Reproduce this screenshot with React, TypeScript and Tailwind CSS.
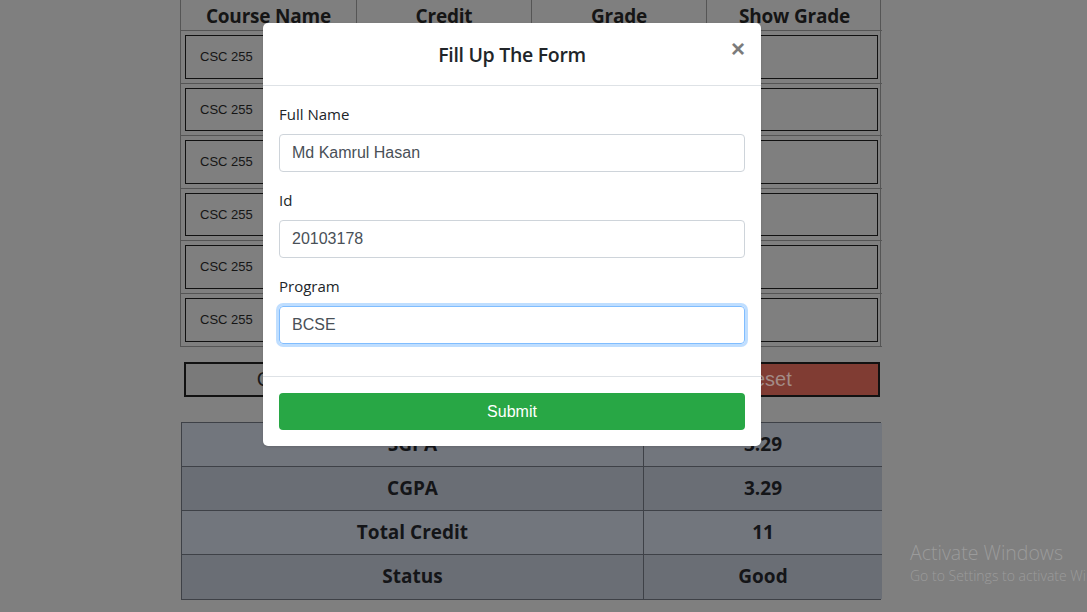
import { useState } from "react";

const courses = ["CSC 255", "CSC 255", "CSC 255", "CSC 255", "CSC 255", "CSC 255"];

const summary = [
  { label: "SGPA", value: "3.29" },
  { label: "CGPA", value: "3.29" },
  { label: "Total Credit", value: "11" },
  { label: "Status", value: "Good" },
];

const App = () => {
  const [name, setName] = useState("Md Kamrul Hasan");
  const [id, setId] = useState("20103178");
  const [program, setProgram] = useState("BCSE");

  return (
    <div className="relative h-[612px] w-[1087px] overflow-hidden bg-[#7f7f7f] font-['Open_Sans',sans-serif]">
      {/* dimmed page behind the modal */}
      <div className="ml-[180px] w-[701px]">
        <div className="grid grid-cols-[176px_175px_175px_175px] border-x border-[#555]">
          {["Course Name", "Credit", "Grade", "Show Grade"].map((h, i) => (
            <div
              key={h}
              className={`flex h-[31px] items-center justify-center border-b border-[#555] text-[19px] font-bold leading-none text-[#151515] ${i < 3 ? "border-r" : ""}`}
            >
              <span className="mt-[3px] tracking-[-0.2px]">{h}</span>
            </div>
          ))}
          {courses.map((c, r) =>
            [0, 1, 2, 3].map((col) => (
              <div
                key={`${r}-${col}`}
                className={`h-[52.6px] border-b border-[#555] p-[4px] ${col < 3 ? "border-r" : ""}`}
              >
                <div className="flex h-full items-center border border-[#111] px-[14px] font-['Liberation_Sans',sans-serif] text-[13px] text-[#151515]">
                  {col === 0 ? c : ""}
                </div>
              </div>
            ))
          )}
        </div>

        <div className="mt-[15px] grid grid-cols-3 gap-[5px] pl-[4px] pr-[1px]">
          <button className="h-[35px] border-2 border-[#111] bg-[#7a7a7a] font-['Liberation_Sans',sans-serif] text-[20px] text-[#1a1a1a]">
            Calculate
          </button>
          <button className="h-[35px] border-2 border-[#111] bg-[#7a7a7a] font-['Liberation_Sans',sans-serif] text-[20px] text-[#1a1a1a]">
            Save
          </button>
          <button className="h-[35px] border-2 border-[#111] bg-[#803c33] font-['Liberation_Sans',sans-serif] text-[20px] text-[#a38b86]">
            Reset
          </button>
        </div>

        <div className="mt-[25px] ml-[1px] grid grid-cols-[462px_238px] border border-[#3e4147] text-[19px] font-bold text-[#141518]">
          {summary.map((s, i) => (
            <div key={s.label} className="contents">
              <div
                className={`flex h-[44px] items-center justify-center border-r border-[#3e4147] ${i < 3 ? "border-b" : ""} ${i % 2 === 0 ? "bg-[#72767d]" : "bg-[#6a6e75]"}`}
              >
                {s.label}
              </div>
              <div
                className={`flex h-[44px] items-center justify-center border-[#3e4147] ${i < 3 ? "border-b" : ""} ${i % 2 === 0 ? "bg-[#72767d]" : "bg-[#6a6e75]"}`}
              >
                {s.value}
              </div>
            </div>
          ))}
        </div>
      </div>

      {/* modal */}
      <div className="absolute left-[263px] top-[23px] w-[498px] rounded-[5px] bg-white shadow-sm">
        <div className="relative flex h-[63px] items-center justify-center border-b border-[#dee2e6]">
          <h5 className="mt-[2px] text-[19.5px] font-semibold tracking-[-0.3px] text-[#212529]">Fill Up The Form</h5>
          <span className="absolute right-[16px] top-[14px] font-['Liberation_Sans',sans-serif] text-[24px] font-bold leading-none text-[#7b7b7b]">
            ×
          </span>
        </div>
        <div className="px-[16px] pb-[16px] pt-[16px]">
          {[
            { label: "Full Name", value: name, set: setName, focus: false },
            { label: "Id", value: id, set: setId, focus: false },
            { label: "Program", value: program, set: setProgram, focus: true },
          ].map((f) => (
            <div key={f.label} className="mb-[16px]">
              <label className="mb-[8px] block text-[15px] leading-[24px] text-[#212529]">{f.label}</label>
              <input
                value={f.value}
                onChange={(e) => f.set(e.target.value)}
                className={`h-[38px] w-full rounded-[4px] border px-[12px] font-['Liberation_Sans',sans-serif] text-[16px] text-[#495057] outline-none ${f.focus ? "border-[#80bdff] shadow-[0_0_0_3px_rgba(0,123,255,0.25)]" : "border-[#ced4da]"}`}
              />
            </div>
          ))}
        </div>
        <div className="border-t border-[#dee2e6] px-[16px] py-[16px]">
          <button className="h-[37px] w-full rounded-[4px] bg-[#28a745] font-['Liberation_Sans',sans-serif] text-[16px] text-white">
            Submit
          </button>
        </div>
      </div>

      <div className="absolute left-[910px] top-[540px] whitespace-nowrap font-['Open_Sans',sans-serif] text-[#9b9b9b]">
        <div className="text-[19.5px] font-light leading-[26px]">Activate Windows</div>
        <div className="text-[14px] font-light leading-[20px]">Go to Settings to activate Windows.</div>
      </div>
    </div>
  );
};

export default App;
